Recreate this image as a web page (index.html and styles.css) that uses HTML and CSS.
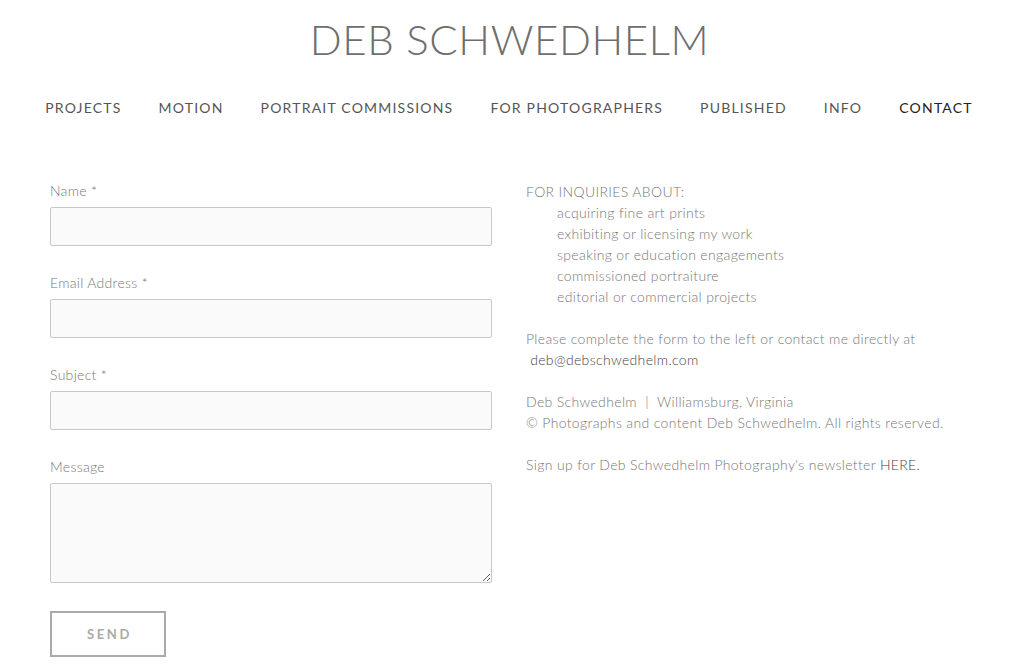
FILE: index.html
```html
<!DOCTYPE html>
<html lang="en">
<head>
<meta charset="utf-8">
<title>Contact — Deb Schwedhelm</title>
<link rel="stylesheet" href="styles.css">
</head>
<body>
<header class="site-header">
  <h1 class="site-title">DEB SCHWEDHELM</h1>
  <nav class="main-nav">
    <a href="#">PROJECTS</a>
    <a href="#">MOTION</a>
    <a href="#">PORTRAIT COMMISSIONS</a>
    <a href="#">FOR PHOTOGRAPHERS</a>
    <a href="#">PUBLISHED</a>
    <a href="#">INFO</a>
    <a href="#" class="active">CONTACT</a>
  </nav>
</header>
<main class="content">
  <form class="contact-form">
    <div class="field">
      <label>Name *</label>
      <input type="text" class="input">
    </div>
    <div class="field">
      <label>Email Address *</label>
      <input type="text" class="input">
    </div>
    <div class="field">
      <label>Subject *</label>
      <input type="text" class="input">
    </div>
    <div class="field last">
      <label>Message</label>
      <textarea class="textarea"></textarea>
    </div>
    <button type="button" class="send">SEND</button>
  </form>
  <div class="info">
    <p>FOR INQUIRIES ABOUT:</p>
    <ul class="topics">
      <li>acquiring fine art prints</li>
      <li>exhibiting or licensing my work</li>
      <li>speaking or education engagements</li>
      <li>commissioned portraiture</li>
      <li>editorial or commercial projects</li>
    </ul>
    <p class="gap">Please complete the form to the left or contact me directly at<br><a href="#" class="link">&nbsp;deb@debschwedhelm.com</a></p>
    <p class="gap">Deb Schwedhelm &nbsp;| &nbsp;Williamsburg, Virginia<br>© Photographs and content Deb Schwedhelm. All rights reserved.</p>
    <p class="gap">Sign up for Deb Schwedhelm Photography's newsletter <a href="#" class="link">HERE.</a></p>
  </div>
</main>
</body>
</html>
```
FILE: styles.css
```css
* { box-sizing: border-box; }
html, body { margin: 0; padding: 0; background: #fff; }
body {
  font-family: "Lato", "Liberation Sans", sans-serif;
  color: #777;
}
.site-header {
  display: flex;
  flex-direction: column;
  align-items: center;
  padding-top: 17px;
}
.site-title {
  margin: 0;
  font-weight: 300;
  font-size: 42px;
  line-height: 44px;
  letter-spacing: 0.6px;
  color: #6e6e6e;
  padding-right: 16px;
}
.main-nav {
  display: flex;
  gap: 37px;
  margin-top: 39px;
  padding-right: 17px;
}
.main-nav a {
  text-decoration: none;
  color: #555;
  font-size: 14px;
  line-height: 16px;
  letter-spacing: 1.2px;
  font-weight: 400;
}
.main-nav a.active { color: #222; }
.content {
  display: flex;
  padding: 67px 0 0 50px;
}
.contact-form {
  width: 442px;
  display: flex;
  flex-direction: column;
}
.field {
  display: flex;
  flex-direction: column;
  margin-bottom: 29px;
}
.field.last { margin-bottom: 28px; }
.field label {
  font-size: 14px;
  line-height: 16px;
  font-weight: 300;
  letter-spacing: 0.3px;
  color: #777;
  margin-bottom: 8px;
}
.input, .textarea {
  width: 442px;
  height: 39px;
  background: #fafafa;
  border: 1px solid #c8c8c8;
  border-radius: 2px;
  font-family: inherit;
}
.textarea {
  height: 100px;
  resize: vertical;
}
.send {
  width: 116px;
  height: 46px;
  background: #fff;
  border: 2px solid #aaa;
  color: #aaa;
  font-family: inherit;
  font-weight: 700;
  font-size: 13px;
  letter-spacing: 2.6px;
  padding: 0 0 0 3px;
}
.info {
  margin-left: 34px;
  margin-top: -2px;
  font-size: 14px;
  line-height: 21px;
  font-weight: 300;
  letter-spacing: 0.35px;
  color: #777;
}
.info p { margin: 0; }
.info .gap { margin-top: 21px; }
.topics {
  list-style: none;
  margin: 0;
  padding: 0 0 0 31px;
}
.link { color: #444; text-decoration: none; }
```
